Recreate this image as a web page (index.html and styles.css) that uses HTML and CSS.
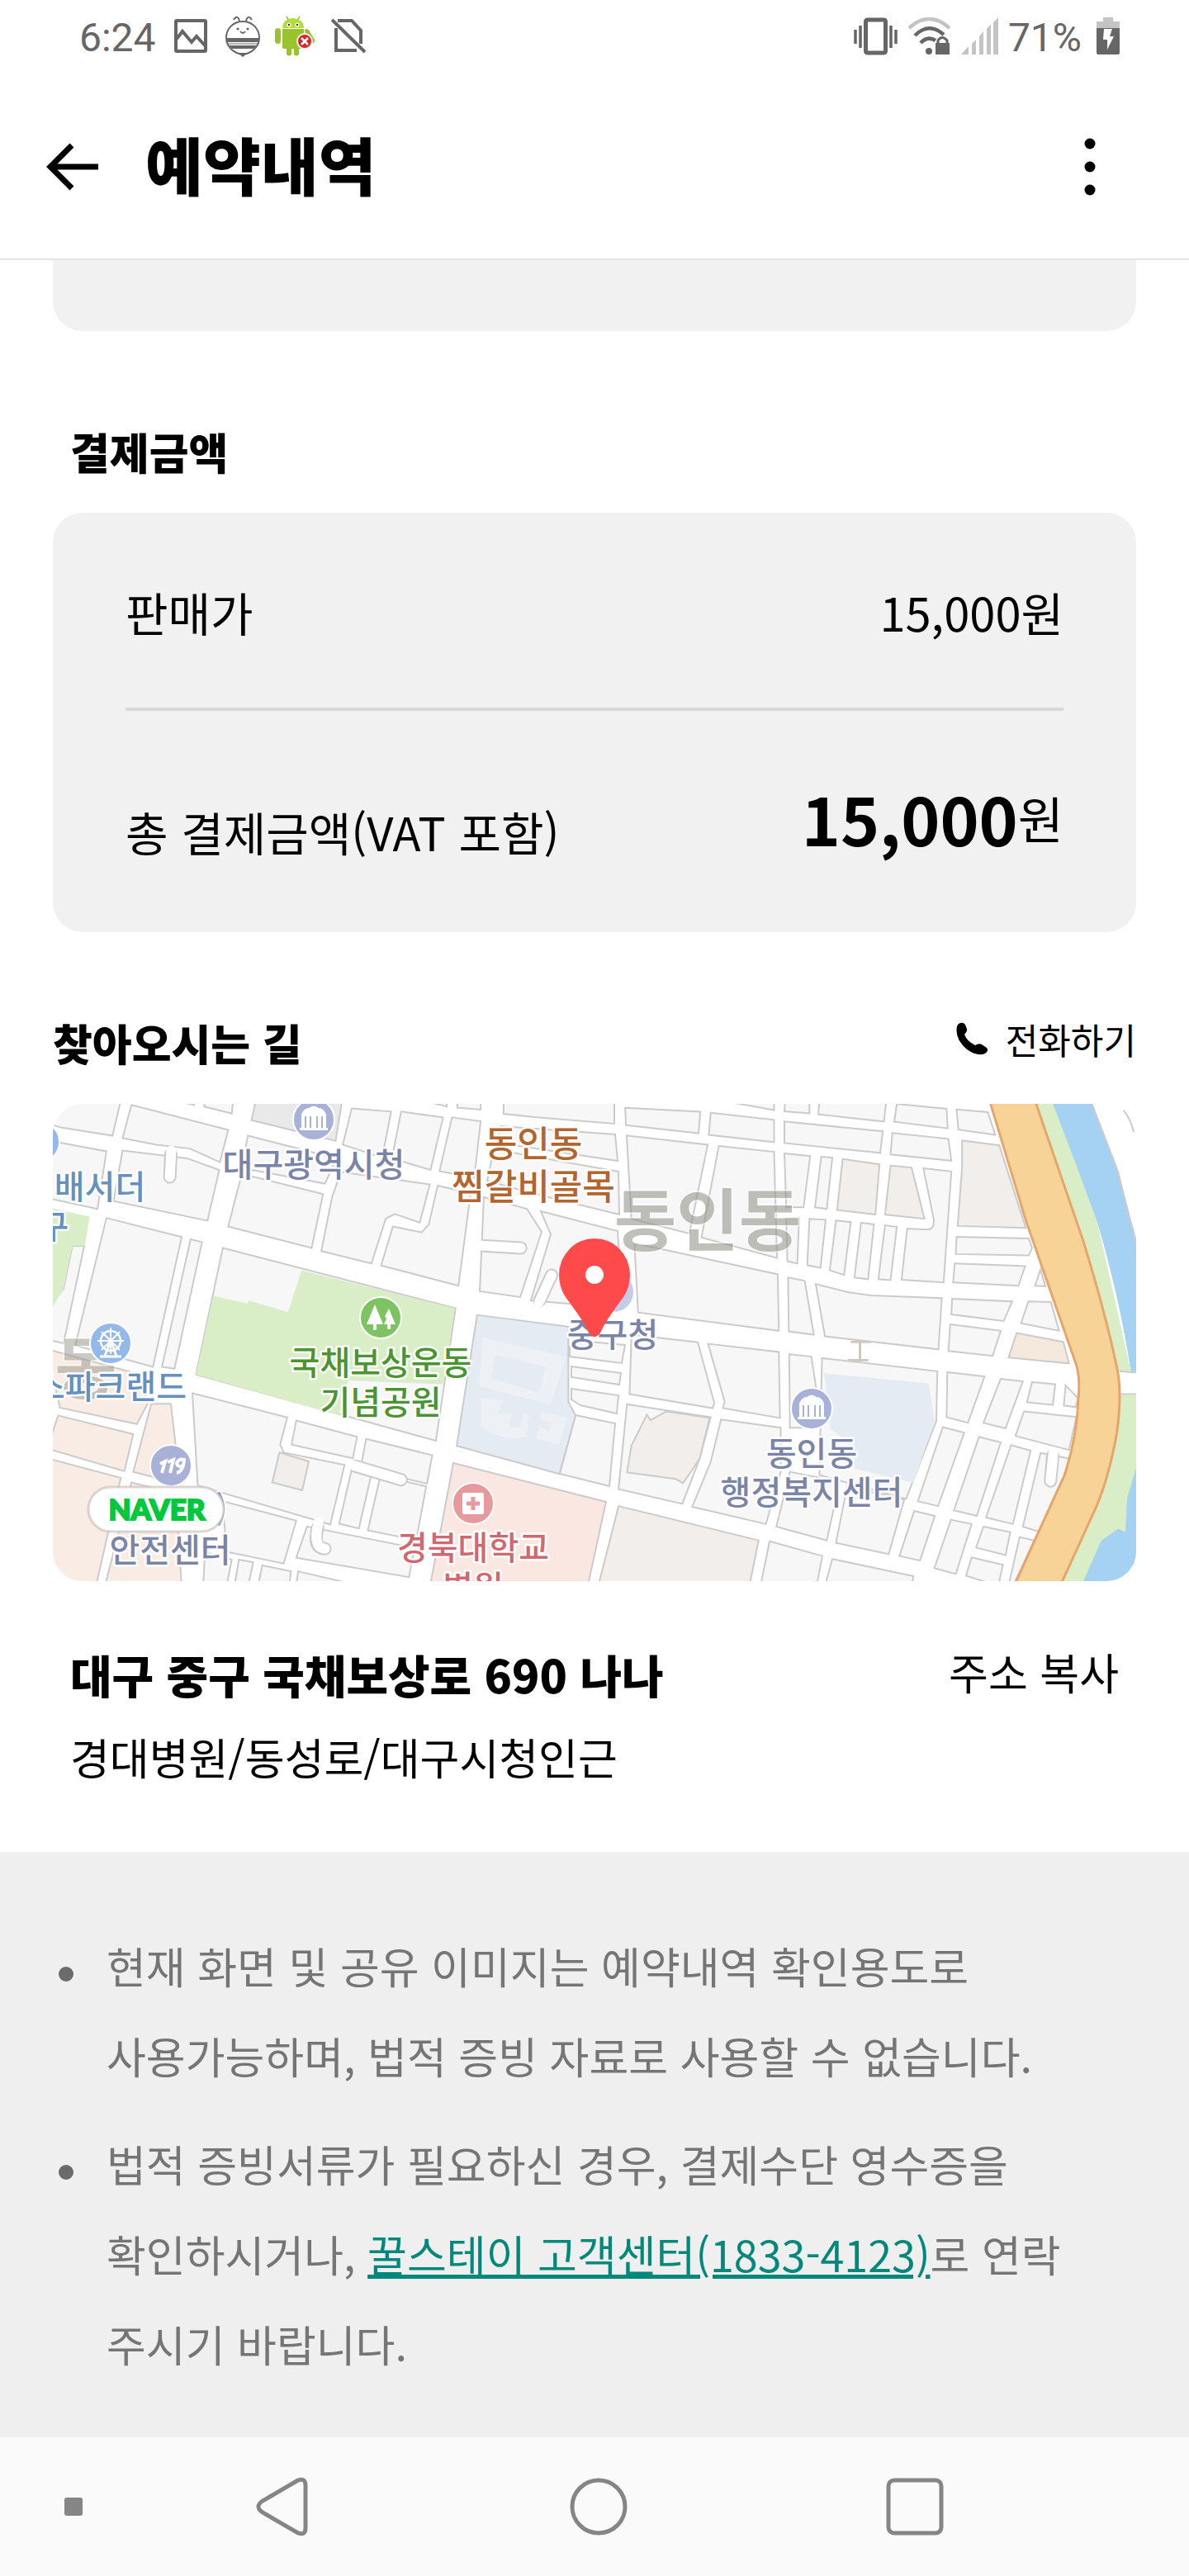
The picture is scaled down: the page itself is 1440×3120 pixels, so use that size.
FILE: index.html
```html
<!DOCTYPE html>
<html lang="ko">
<head>
<meta charset="utf-8">
<meta name="viewport" content="width=device-width, initial-scale=1">
<title>예약내역</title>
<link rel="stylesheet" href="styles.css">
</head>
<body>
<div class="status">
  <div class="status-group">
    <span class="status-text">6:24</span>
    <svg class="ic-photo" width="40" height="42" viewBox="0 0 40 42" aria-hidden="true"><rect x="2" y="2" width="36" height="37" rx="1" fill="none" stroke="#666" stroke-width="4"/><path d="M3 24L10 15L21 28L27 21L37 32" fill="none" stroke="#666" stroke-width="4"/></svg>
    <svg class="ic-bee" width="42" height="50" viewBox="0 0 42 50" aria-hidden="true"><g fill="none" stroke="#666" stroke-width="2"><path d="M17 7C16 1 13 0 10 5M25 7C26 1 29 0 32 5"/><path d="M21 7C9 7 1 16 1 27C1 38 11 46 21 47C31 46 41 38 41 27C41 16 33 7 21 7Z"/><path d="M18 19Q21 23 24 19"/></g><circle cx="15" cy="16" r="1.6" fill="#666"/><circle cx="27" cy="16" r="1.6" fill="#666"/><path d="M1 27H41V32H2ZM4 36H38L34 40H8ZM15 45H27L21 50Z" fill="#666"/><path d="M2 34H40" stroke="#666" stroke-width="1"/></svg>
    <svg class="ic-android" width="50" height="50" viewBox="0 0 50 50" aria-hidden="true"><path d="M14 1L17 6M30 1L27 6" stroke="#9abf2f" stroke-width="1.5"/><g fill="#9ac42c"><path d="M9 15Q9 4 22 3Q35 4 35 15Z" fill="#b2dc3a"/><path d="M9 16H35V38Q35 40 32 40H29V47Q26 50 23 47V40H20V47Q17 50 14 47V40H12Q9 40 9 38Z"/><rect x="0" y="15" width="7" height="19" rx="3.5"/><path d="M36 17Q40 14 42 19L48 29Q49 34 44 33L37 27Z"/></g><circle cx="17" cy="11" r="2.6" fill="#fff"/><circle cx="27" cy="11" r="2.6" fill="#fff"/><circle cx="17" cy="11" r="1.2" fill="#333"/><circle cx="27" cy="11" r="1.2" fill="#333"/><circle cx="36" cy="31" r="9" fill="#d5282b" stroke="#eee" stroke-width="2"/><path d="M32 27L40 35M40 27L32 35" stroke="#fff" stroke-width="2.5"/></svg>
    <svg width="44" height="44" viewBox="0 0 44 44" aria-hidden="true"><path d="M6 12V39H31M8 3H25L36 15V31M1 2L41 41" fill="none" stroke="#666" stroke-width="4"/></svg>
  </div>
  <div class="status-group status-right">
    <svg width="54" height="46" viewBox="0 0 54 46" aria-hidden="true"><rect x="14.500" y="3" width="24" height="40" rx="2" fill="none" stroke="#666" stroke-width="5"/><path d="M2 15V32M8 10V37M45 10V37M51 15V32" stroke="#666" stroke-width="3.500"/></svg>
    <svg class="ic-wifi" width="52" height="46" viewBox="0 0 52 46" fill="none" aria-hidden="true"><path d="M1 13Q25-9 50 13" stroke="#c4c4c4" stroke-width="4.500"/><path d="M8 22Q25 5 43 21" stroke="#666" stroke-width="4.500"/><path d="M15 31Q23 22 33 28" stroke="#666" stroke-width="4.500"/><circle cx="25" cy="41" r="4" fill="#666"/><rect x="33" y="31" width="17" height="14" fill="#666"/><path d="M36 32V28Q41 21 47 28V32" stroke="#666" stroke-width="3"/></svg>
    <svg class="ic-signal" width="45" height="46" viewBox="0 0 45 46" fill="#c4c4c4" aria-hidden="true"><path d="M0 45L9 35V45ZM13 32L18 27V45H13ZM22 23L27 17V45H22ZM31 14L36 8V45H31ZM39 6L45 0V45H39Z"/></svg>
    <span class="status-text">71%</span>
    <svg class="ic-batt" width="28" height="46" viewBox="0 0 28 46" aria-hidden="true"><path d="M8 0H20V5H28V13H0V5H8Z" fill="#c4c4c4"/><path d="M0 13H28V43Q28 45 26 45H2Q0 45 0 43Z" fill="#666"/><path d="M9 14H19L16 23H21L13 39V27H8Z" fill="#fff"/></svg>
  </div>
</div>

<header class="bar">
  <button class="icon-btn" type="button" aria-label="뒤로"><svg width="64" height="60" viewBox="0 0 64 60" fill="none" stroke="#000" stroke-width="7"><path d="M31 4L5 30L31 56M5 30H63"/></svg></button>
  <h1>예약내역</h1>
  <button class="icon-btn more" type="button" aria-label="더보기"><svg width="16" height="72" viewBox="0 0 16 72"><circle cx="8" cy="8" r="6.500"/><circle cx="8" cy="36" r="6.500"/><circle cx="8" cy="64" r="6.500"/></svg></button>
</header>

<main>
  <div class="card-tail"></div>

  <h2 class="inset">결제금액</h2>
  <section class="card">
    <div class="row"><span>판매가</span><span>15,000원</span></div>
    <hr>
    <div class="row total"><span>총 결제금액(VAT 포함)</span><span class="amount"><strong>15,000</strong><span class="won">원</span></span></div>
  </section>

  <div class="heading">
    <h2>찾아오시는 길</h2>
    <button class="call" type="button"><svg width="40" height="40" viewBox="0 0 40 40" aria-hidden="true"><path d="M3 2Q8-1 11 3L13 8Q14 11 10 15Q13 23 23 28Q28 25 31 27L37 31Q40 35 35 38Q26 42 13 33Q-2 20 1 5Q2 3 3 2Z"/></svg>전화하기</button>
  </div>

  <svg class="map" viewBox="64 1337 1312 578" preserveAspectRatio="xMidYMid slice" role="img" aria-label="지도">
    <rect x="64" y="1337" width="1312" height="578" fill="#fff"/>
    <g class="block">
      <path d="M610 1330H744V1361L647 1353L610 1349ZM606 1364L745 1374L748 1406L602 1384ZM598 1392L749 1419L750 1471L640 1444L590 1430ZM586 1450L638 1464L656 1492L630 1571L581 1564ZM655 1467L748 1491L754 1586L700 1580L643 1575L667 1495Z"/>
      <path d="M702 1624L757 1629L753 1651L690 1643V1630ZM692 1655L752 1663L750 1677L692 1668ZM692 1682L749 1690L747 1712L703 1702L692 1695ZM697 1714L745 1724L738 1800L678 1785Z"/>
      <path class="pink" d="M549 1772L734 1819L712 1920H521Z"/>
    </g>

    <g class="block" transform="translate(40 1200) scale(.4337 .4719)">
      <path d="M40 270H248L222 372L75 350L40 340ZM275 293L545 357L522 440L438 405L345 395L250 378ZM385 280H450V293ZM482 270H560L555 315L478 297ZM890 302L1000 310L975 428L865 395ZM1028 310L1145 325L1110 460L1002 430ZM1040 270H1155V297ZM1170 325L1250 335L1232 480L1135 463ZM1185 270H1250V305L1185 300Z"/>
      <path class="gray" d="M625 270H865L845 385L610 332Z"/>
      <path d="M75 390L205 412L180 560L40 532V385ZM250 410L430 430L520 460L487 590L225 540ZM600 372L848 430L815 495L583 455ZM583 470L810 522L778 660L545 605ZM860 465L1108 497L1080 595L1010 573L985 585L945 700L805 668L835 530ZM1130 500L1222 520L1188 757L972 705L1005 605L1085 620L1105 600Z"/>
      <path d="M110 655H143L85 905L40 895V815L85 765ZM205 583L415 632L335 965L118 910ZM440 638L472 645L395 970L360 965ZM530 660L1180 815L1125 1155L455 985Z"/>
      <path class="green" d="M40 555L158 580L145 655H110L85 765L40 835ZM503 783L600 803L603 795L712 825L750 718L1178 815L1145 1010L880 1000L855 1090L455 985Z"/>
      <path class="blue" d="M1240 832L1495 862V1055L1515 1090L1470 1240L1183 1168Z"/>
      <path class="campus" d="M1255 890L1490 940L1445 1062L1245 1015ZM1290 935L1280 995L1415 1033L1430 965ZM1250 1045L1310 1050L1300 1085H1335L1330 1120H1360L1370 1085L1385 1090L1380 1145L1340 1150L1310 1145L1250 1120ZM1420 1080L1490 1095L1470 1165L1405 1150L1415 1115L1440 1130L1450 1110L1415 1100Z"/>
      <path class="peach" d="M40 920L300 985L320 1060L290 1112L75 1070ZM70 1090L280 1138L255 1233L40 1175ZM330 1060H385L400 1180L345 1250L280 1235ZM40 1200L245 1250L175 1530H40ZM275 1262L400 1290L415 1530H200Z"/>
      <path d="M445 1033L710 1095L690 1165L700 1185L870 1217L830 1370L460 1270ZM735 1103L905 1145L893 1200L722 1165ZM930 1150L1115 1192L1100 1265L915 1225ZM890 1228L945 1240L910 1380L855 1368ZM970 1245L1098 1272L1070 1410L935 1385ZM530 1310L735 1360L700 1470L540 1440ZM480 1440L555 1460L540 1530H475ZM575 1460L615 1467L600 1530H562ZM640 1475L720 1490L715 1530H628ZM765 1375L1065 1430L1050 1505L735 1455ZM740 1490L880 1520L735 1530Z"/>
      <path class="tan" d="M688 1185L770 1208L752 1282L668 1262Z"/>
      <path class="lane" d="M385 420L382 478M1262 655L1362 660M1415 795L1448 730M900 1220L1028 1255M795 1378Q780 1430 815 1432"/>
      <path class="lane-in" d="M386 410L382 478M1252 654L1362 660M1413 800L1448 730M890 1217L1028 1255M797 1365Q780 1430 815 1432"/>
    </g>

    <g class="block" transform="translate(700 1320) scale(.4464 .3954)">
      <path d="M128 55L332 67L327 133L130 108ZM360 70L532 92V160L355 138ZM375 30H532V62ZM562 30H628V72L560 66ZM655 30H837L830 97L652 75ZM560 97L827 127L820 193L560 163ZM865 43L1000 58L1003 118L858 98ZM1027 60L1112 68L1132 138L1032 122ZM853 132L1005 150L1013 217L848 198Z"/>
      <path d="M132 140L352 168L302 440L145 395ZM382 172L532 190L540 515L335 452ZM560 195L630 203L612 360H565ZM660 205L690 208L675 365L643 360ZM937 240L1013 250L992 590L878 582L893 425L950 428Q968 425 965 395ZM565 393H600L595 532L568 525ZM628 395L672 398L658 545L622 537ZM700 400L740 405L722 567L683 553ZM768 407L803 412L787 580L750 575ZM833 415L865 420L848 583L815 580ZM1027 450L1223 455L1232 485L1223 507L1025 503ZM1022 532L1213 540L1195 600L1018 590ZM1255 550L1268 602L1240 600Z"/>
      <path class="tan" d="M718 212L818 228L807 382L703 368ZM848 232L905 238L940 395L833 382ZM1042 155L1143 170L1215 423L1030 417L1042 240Z"/>
      <path d="M153 470L542 565L545 738L163 682ZM570 575L615 585L640 750L572 740ZM645 595L735 620L795 630L987 638L978 795L670 755ZM1015 640L1178 648L1155 708L1013 688ZM1222 648L1283 650L1305 738L1202 715ZM1010 718L1147 738L1125 815L1005 800Z"/>
      <path d="M145 750L325 773L370 960L365 975L140 932ZM353 778L545 803L548 1005L393 975L398 955ZM573 810L633 817L650 940L640 1035H575ZM662 822L975 862L972 1015L890 1253L655 1180ZM1002 865L1103 878L1058 1020L1000 1003ZM1147 885L1207 893L1160 1037L1100 1020ZM1232 895L1295 902L1288 965L1218 957ZM1323 905L1357 945L1350 972L1318 967ZM1210 985L1352 1002L1332 1103L1187 1060Z"/>
      <path class="sand" d="M1190 745L1317 772L1332 838L1168 820Z"/>
      <path class="blue flat" d="M668 868L952 900L968 1015L910 1203L750 1160V1090L685 1040Z"/>
      <path d="M133 963L360 1003L330 1130L283 1268L110 1223ZM388 1010L550 1035V1170L510 1330L310 1277L360 1140ZM575 1170L710 1200L675 1380L538 1338ZM730 1215L885 1255L843 1422L700 1388ZM990 1033L1048 1050L977 1275L922 1260ZM1088 1063L1147 1080L1082 1305L1020 1288ZM1175 1088L1228 1105L1180 1330L1107 1310ZM1255 1112L1335 1130L1320 1180L1250 1353L1207 1338ZM912 1290L968 1305L928 1442L872 1428ZM1012 1317L1068 1330L1025 1483L967 1465ZM1100 1338L1173 1355L1160 1425L1080 1402ZM1068 1432L1153 1455L1140 1520L1053 1488ZM1198 1370L1238 1380L1180 1520H1168ZM520 1383L663 1428L647 1520H495ZM690 1437L910 1490L905 1520H670Z"/>
      <path class="tan" d="M240 985L357 1005L330 1130L285 1205L265 1192L133 1172L145 1090L187 995L197 1012ZM110 1275L490 1380L465 1520H55Z"/>
      <path class="lane" d="M1288 1120L1282 1198"/>
      <path class="lane-in" d="M1290 1108L1282 1198"/>
      <path class="footbridge" d="M740 772H795M765 772V830M732 828H788"/>
      <path class="green flat" d="M1230 30H1290L1410 410L1500 862H1465L1360 440ZM1465 935H1530V1520H1305L1440 1170Z"/>
      <path class="water" d="M1284 30H1390L1465 250L1530 520V867L1500 862Q1470 640 1410 410Q1350 220 1284 30ZM1530 1100L1490 1250L1485 1355L1465 1345L1420 1380L1365 1520H1530Z"/>
      <path class="edge" d="M1390 30L1465 250L1513 470M1470 862L1520 867M1472 932H1520M1480 62Q1500 90 1508 130"/>
      <path class="highway" d="M1116 30L1215 400L1345 820Q1364 870 1358 935Q1355 1060 1320 1180L1250 1353L1183 1520H1308L1405 1280Q1440 1190 1462 1050Q1478 920 1460 840Q1430 680 1370 460L1239 30Z"/>
    </g>

    <g class="poi">
      <circle cx="47" cy="1383" r="25" fill="#93b9ea"/>
      <circle cx="743" cy="1565" r="25" fill="#c5cce8"/>
      <circle cx="461" cy="1596" r="25" fill="#7cc462"/>
      <circle cx="207" cy="1775" r="25" fill="#a8b1d8"/>
      <circle cx="573" cy="1821" r="25" fill="#e79a9d"/>
      <circle cx="380" cy="1356" r="25" fill="#a8b1d8"/>
      <circle cx="983" cy="1706" r="25" fill="#a8b1d8"/>
    </g>
    <g fill="#fff">
      <path id="hall" d="M365 1350Q368 1342 374 1342Q380 1337 386 1342Q392 1342 395 1350V1366H397V1369H363V1366H365ZM369 1352V1366H371V1352ZM375 1352V1366H377V1352ZM383 1352V1366H385V1352ZM389 1352V1366H391V1352Z" fill-rule="evenodd"/>
      <use href="#hall" x="603" y="350"/>
      <path d="M454 1580L464 1604H456V1611H452V1604H444ZM471 1585L479 1604H473V1610H469V1604H465L468 1597L466 1594Z"/>
      <rect x="560" y="1808" width="26" height="26" rx="2"/>
    </g>
    <path d="M573 1813V1829M565 1821H581" stroke="#e79a9d" stroke-width="5"/>
    <path d="M196 1784L200 1770L194 1773M206 1784L210 1768L203 1771M214 1784Q222 1782 223 1768Q217 1766 214 1772Q215 1778 222 1775" fill="none" stroke="#fff" stroke-width="4"/>

    <g class="label">
      <text class="district faint" x="104" y="1687">동</text>
      <text class="district" x="857" y="1508">동인동</text>
      <text class="slate" x="380" y="1425">대구광역시청</text>
      <text class="sky" x="121" y="1452">배서더</text>
      <text class="sky" x="65" y="1500">구</text>
      <text class="sky" x="134" y="1694">스파크랜드</text>
      <text class="park" x="461" y="1665">국채보상운동</text>
      <text class="park" x="461" y="1713">기념공원</text>
      <text class="food" x="646" y="1401">동인동</text>
      <text class="food" x="646" y="1453">찜갈비골목</text>
      <text class="slate" x="742" y="1631">중구청</text>
      <text class="slate" x="983" y="1775">동인동</text>
      <text class="slate" x="983" y="1822">행정복지센터</text>
      <text class="rose" x="573" y="1889">경북대학교</text>
      <text class="rose" x="573" y="1937">병원</text>
      <text class="slate" x="268" y="1843">)</text>
      <text class="slate" x="206" y="1892">안전센터</text>
    </g>
    <circle cx="134" cy="1627" r="25" fill="#93b9ea" class="wheel"/>
    <g fill="none" stroke="#fff"><circle cx="134" cy="1624" r="12" stroke-width="2.500"/><path d="M134 1608V1640M118 1624H150M123 1613L145 1635M145 1613L123 1635" stroke-width="2"/><path d="M134 1624L127 1642M134 1624L141 1642M121 1643H147" stroke-width="3"/></g>

    <path d="M720 1619Q714 1619 710 1608Q705 1598 685 1571Q677 1559 677 1544A43 44 0 0 1 763 1544Q763 1559 755 1571Q735 1598 730 1608Q726 1619 720 1619Z" fill="#ff4a4b"/>
    <circle cx="720" cy="1544" r="11" fill="#fff"/>
    <rect x="107" y="1801" width="164" height="54" rx="27" fill="#fff" stroke="#ccc5c0" stroke-opacity=".7" stroke-width="3"/>
    <text class="naver" x="190" y="1841">NAVER</text>
  </svg>

  <section class="address">
    <div class="address-line"><strong>대구 중구 국채보상로 690 나나</strong><button type="button">주소 복사</button></div>
    <p>경대병원/동성로/대구시청인근</p>
  </section>
</main>

<ul class="notice">
  <li><span>현재 화면 및 공유 이미지는 예약내역 확인용도로 사용가능하며, 법적 증빙 자료로 사용할 수 없습니다.</span></li>
  <li><span>법적 증빙서류가 필요하신 경우, 결제수단 영수증을 확인하시거나, <a href="tel:1833-4123">꿀스테이 고객센터(1833-4123)</a>로 연락 주시기 바랍니다.</span></li>
</ul>

<nav class="system-nav" aria-label="시스템">
  <button class="icon-btn dot" type="button" aria-label="고정"><svg width="22" height="22" viewBox="0 0 22 22"><rect width="22" height="22" rx="3" fill="#858585"/></svg></button>
  <button class="icon-btn" type="button" aria-label="이전"><svg width="64" height="72" viewBox="0 0 64 72" fill="none" stroke="#858585" stroke-width="5"><path d="M51 4L8 29Q-2 36 8 43L51 68Q60 71 60 62V10Q60 1 51 4Z"/></svg></button>
  <button class="icon-btn" type="button" aria-label="홈"><svg width="70" height="70" viewBox="0 0 70 70" fill="none" stroke="#858585" stroke-width="5"><circle cx="35" cy="35" r="32"/></svg></button>
  <button class="icon-btn" type="button" aria-label="최근 앱"><svg width="70" height="70" viewBox="0 0 70 70" fill="none" stroke="#858585" stroke-width="5"><rect x="3" y="3" width="64" height="64" rx="7"/></svg></button>
</nav>
</body>
</html>
```
FILE: styles.css
```css
* { box-sizing: border-box; }
body {
  margin: 0;
  background: #fff;
  color: #000;
  font-family: "Noto Sans CJK KR", sans-serif;
  font-size: 52px;
  line-height: 80px;
}
h1, h2, p, ul { margin: 0; padding: 0; }
svg { display: block; }
button {
  border: 0;
  padding: 0;
  background: none;
  color: inherit;
  font: inherit;
}
.icon-btn { display: flex; align-items: center; justify-content: center; }

/* status bar */
.status {
  display: flex;
  justify-content: space-between;
  height: 90px;
  padding: 0 84px 0 96px;
}
.status-group { display: flex; align-items: center; height: 88px; gap: 22px; }
.status-right { gap: 12px; }
.status-text { color: #666; font: 48px/60px Roboto, sans-serif; padding-top: 4px; }
.ic-android { margin-left: -4px; margin-right: -4px; }
.ic-batt { margin-left: 6px; }

/* title bar */
.bar {
  display: flex;
  align-items: center;
  height: 225px;
  padding: 0 112px 0 56px;
  border-bottom: 2px solid #e5e5e5;
}
.bar h1 {
  flex: 1;
  padding: 0 0 8px 56px;
  font-size: 76px;
  line-height: 100px;
  font-weight: 900;
}

main { padding: 0 64px; }
.card-tail { height: 86px; background: #f1f1f1; border-radius: 0 0 36px 36px; }
h2 { font-size: 52px; line-height: 80px; font-weight: 900; }
h2.inset { margin-top: 106px; padding-left: 21px; }

.card {
  margin-top: 34px;
  padding: 78px 88px 80px;
  background: #f1f1f1;
  border-radius: 36px;
  font-size: 56px;
  line-height: 84px;
}
.row { display: flex; justify-content: space-between; }
.card hr { height: 4px; margin: 74px 0; border: 0; background: #d8d8d8; }
.total { min-height: 114px; align-items: flex-end; }
.amount { display: flex; align-items: center; align-self: flex-start; line-height: 110px; }
.amount strong { font-size: 80px; font-weight: 700; }
.won { font-size: 60px; }

.heading { display: flex; justify-content: space-between; margin-top: 94px; }
.call {
  display: flex;
  align-items: center;
  align-self: flex-start;
  gap: 20px;
  font-size: 43px;
  line-height: 70px;
}

/* map */
.map { width: 100%; height: auto; margin-top: 34px; border-radius: 36px; overflow: hidden; }
.block path { fill: #f7f7f7; stroke: #cbcbcb; stroke-width: 2; vector-effect: non-scaling-stroke; }
.block .gray { fill: #e9e9e9; }
.block .campus { fill: #edf1f6; fill-rule: evenodd; stroke: none; }
.block .sand { fill: #f5e9dd; }
.block .pink { fill: #fae7e1; }
.block .green { fill: #d9edc6; stroke: none; }
.block .blue { fill: #e4ebf3; }
.block .peach { fill: #f9ece4; }
.block .tan { fill: #f1eeeb; }
.block .water { fill: #a5d1f2; stroke: none; }
.block .flat { stroke: none; }
.block .edge { fill: none; }
.block .footbridge { fill: none; stroke: #d0c8c2; stroke-width: 3; }
.block .highway { fill: #f8d398; stroke: #e5a66d; stroke-width: 3; }
.block .lane { fill: none; stroke-width: 16; stroke-linecap: round; }
.block .lane-in { fill: none; stroke: #fff; stroke-width: 12; stroke-linecap: round; }
.poi circle, .wheel { stroke: #fff; stroke-width: 2; }
.label text {
  font-size: 40px;
  font-weight: 500;
  text-anchor: middle;
  stroke: #fff;
  stroke-width: 5;
  stroke-linejoin: round;
  paint-order: stroke;
}
.label .slate { fill: #7a84a8; }
.label .sky { fill: #6491c0; }
.label .park { fill: #4a9432; }
.label .food { fill: #b2652f; font-size: 43px; }
.label .rose { fill: #d0686f; }
.label .district { font-size: 82px; font-weight: 700; fill: #96968e; opacity: .6; stroke-width: 3; }
.label .faint { opacity: .5; }
.naver {
  fill: #03c83c;
  stroke: #03c83c;
  stroke-width: 2;
  font: 900 35px Lato, sans-serif;
  text-anchor: middle;
}

/* address */
.address { padding: 72px 21px 75px; }
.address-line { display: flex; justify-content: space-between; }
.address-line strong { font-size: 55px; font-weight: 900; }
.address-line button { align-self: flex-start; line-height: 76px; }
.address p { margin-top: 21px; }

/* notice */
.notice {
  padding: 83px 64px 59px;
  background: #efefef;
  color: #757575;
  line-height: 109px;
  word-break: keep-all;
  list-style: none;
}
.notice li { display: flex; gap: 40px; padding-left: 7px; }
.notice li::before {
  content: "";
  flex: none;
  width: 18px;
  height: 18px;
  margin-top: 56px;
  border-radius: 50%;
  background: #6b6b6b;
}
.notice li + li { margin-top: 22px; }
.notice a { color: #00897b; }

/* system navigation */
.system-nav {
  display: grid;
  grid-template-columns: 150fr 383fr 383fr 383fr 141fr;
  align-items: center;
  height: 168px;
  background: #fafafa;
}
.dot { padding-left: 27px; }
```
